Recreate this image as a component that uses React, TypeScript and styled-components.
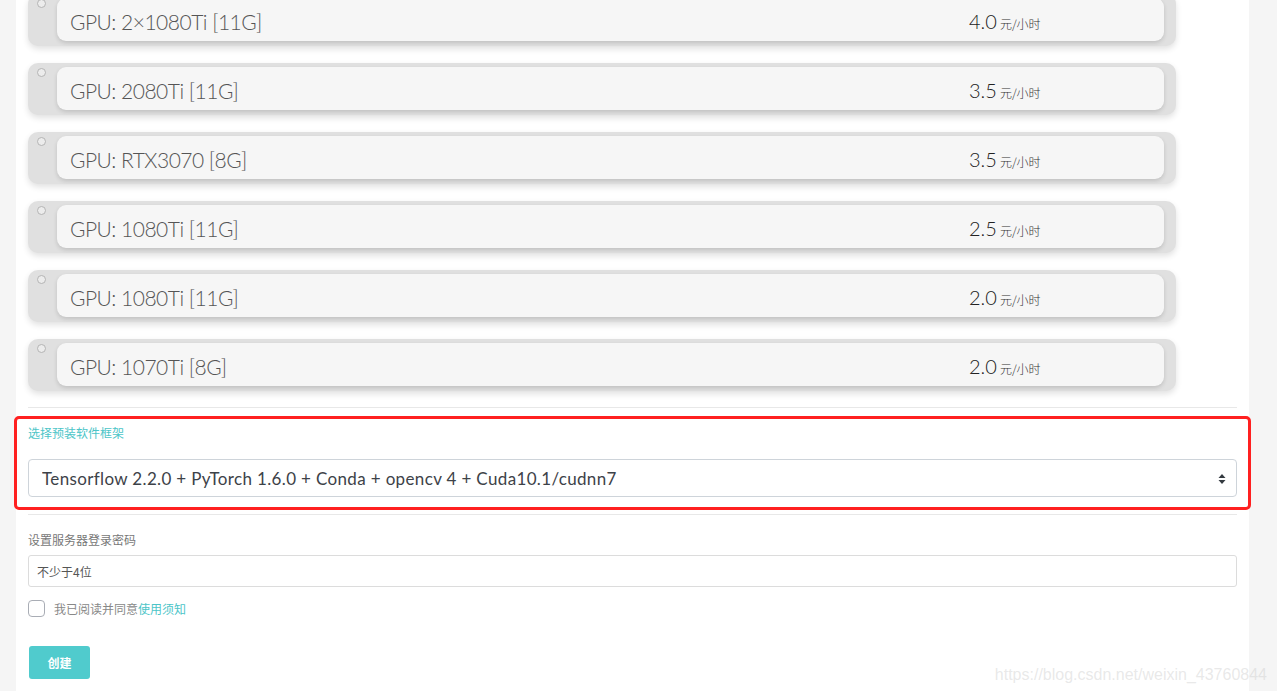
import React from "react";
import styled, { createGlobalStyle } from "styled-components";

const Global = createGlobalStyle`
  html, body { margin: 0; padding: 0; background: #f5f5f5; overflow: hidden; }
  body { font-family: "Lato", "Noto Sans CJK SC", sans-serif; }
  * { box-sizing: border-box; }
`;

const Page = styled.div`
  height: 691px;
  overflow: hidden;
  position: relative;
`;

const Panel = styled.div`
  margin: 0 28px 0 16px;
  background: #fff;
  padding: 0 12px 40px;
  min-height: 691px;
`;

const CardList = styled.div`
  margin-top: -6px;
  display: flex;
  flex-direction: column;
  gap: 17px;
  width: 1148px;
`;

const Card = styled.label`
  display: flex;
  height: 52px;
  background: #e0e0e0;
  border-radius: 10px;
  padding: 4px 12px 5px 9px;
  box-shadow: 0 3px 6px rgba(0, 0, 0, 0.12);
  cursor: pointer;
`;

const Radio = styled.span`
  flex: none;
  width: 9px;
  height: 9px;
  margin-top: 1px;
  margin-right: 11px;
  border-radius: 50%;
  border: 1px solid #b4b4b4;
  background: #ececec;
`;

const CardBody = styled.div`
  flex: 1;
  display: flex;
  align-items: center;
  background: #f6f6f6;
  border-radius: 9px;
  padding: 3px 0 0 13px;
  box-shadow: 0 2px 4px rgba(0, 0, 0, 0.14);
`;

const GpuName = styled.span`
  flex: 1;
  font-family: "Lato", sans-serif;
  font-weight: 300;
  font-size: 21px;
  letter-spacing: -0.5px;
  color: #555;
`;

const Price = styled.span`
  width: 195px;
  font-family: "Lato", sans-serif;
  font-weight: 300;
  font-size: 20px;
  color: #222;
  white-space: nowrap;
`;

const Unit = styled.span`
  margin-left: 3px;
  font-family: "Noto Sans CJK SC", sans-serif;
  font-size: 12px;
  color: #333;
`;

const Divider = styled.hr<{ $top: number; $bottom: number }>`
  border: none;
  border-top: 1px solid #e8e8e8;
  margin: ${(p) => `${p.$top}px 0 ${p.$bottom}px`};
`;

const Highlight = styled.div`
  margin: 0 -14px;
  border: 3px solid #ff2020;
  border-radius: 5px;
  padding: 5px 11px 10px;
`;

const FieldLabel = styled.div<{ $accent?: boolean }>`
  font-family: "Noto Sans CJK SC", sans-serif;
  font-size: 12px;
  line-height: 18px;
  color: ${(p) => (p.$accent ? "#4cc5c8" : "#777")};
`;

const SelectWrap = styled.div`
  position: relative;
  margin-top: 17px;
`;

const Select = styled.select`
  appearance: none;
  width: 100%;
  height: 38px;
  border: 1px solid #ced4da;
  border-radius: 4px;
  background: #fff;
  padding: 0 30px 0 13px;
  font-family: "Lato", sans-serif;
  font-size: 17px;
  letter-spacing: 0.35px;
  color: #3d4248;
`;

const Arrow = styled.svg`
  position: absolute;
  right: 11px;
  top: 15px;
  pointer-events: none;
`;

const Input = styled.input`
  width: 100%;
  height: 32px;
  margin-top: 6px;
  border: 1px solid #dcdcdc;
  border-radius: 3px;
  padding: 0 8px;
  font-family: "Noto Sans CJK SC", sans-serif;
  font-size: 12px;
  color: #555;
  &::placeholder { color: #555; }
`;

const AgreeRow = styled.label`
  display: flex;
  align-items: center;
  gap: 9px;
  margin-top: 13px;
  font-family: "Noto Sans CJK SC", sans-serif;
  font-size: 12px;
  color: #888;
`;

const Box = styled.span`
  width: 17px;
  height: 17px;
  border: 1px solid #a9adb5;
  border-radius: 4px;
  background: #fff;
`;

const Link = styled.a`
  color: #4cc5c8;
  text-decoration: none;
`;

const CreateButton = styled.button`
  display: block;
  margin: 29px 0 0 1px;
  width: 61px;
  height: 33px;
  border: none;
  border-radius: 3px;
  background: #50cbcd;
  color: #fff;
  font-family: "Noto Sans CJK SC", sans-serif;
  font-weight: 700;
  font-size: 12px;
`;

const Watermark = styled.div`
  position: absolute;
  right: 10px;
  bottom: 7px;
  font-family: "Liberation Sans", Arial, sans-serif;
  font-size: 16px;
  color: rgba(205, 205, 205, 0.45);
`;

const gpus = [
  { name: "GPU: 2×1080Ti [11G]", price: "4.0" },
  { name: "GPU: 2080Ti [11G]", price: "3.5" },
  { name: "GPU: RTX3070 [8G]", price: "3.5" },
  { name: "GPU: 1080Ti [11G]", price: "2.5" },
  { name: "GPU: 1080Ti [11G]", price: "2.0" },
  { name: "GPU: 1070Ti [8G]", price: "2.0" },
];

export default function App() {
  return (
    <Page>
      <Global />
      <Panel>
        <CardList>
          {gpus.map((g, i) => (
            <Card key={i}>
              <Radio />
              <CardBody>
                <GpuName>{g.name}</GpuName>
                <Price>
                  {g.price}
                  <Unit>元/小时</Unit>
                </Price>
              </CardBody>
            </Card>
          ))}
        </CardList>
        <Divider $top={16} $bottom={8} />
        <Highlight>
          <FieldLabel $accent>选择预装软件框架</FieldLabel>
          <SelectWrap>
            <Select defaultValue="a">
              <option value="a">
                Tensorflow 2.2.0 + PyTorch 1.6.0 + Conda + opencv 4 + Cuda10.1/cudnn7
              </option>
            </Select>
            <Arrow width="8" height="10" viewBox="0 0 8 10">
              <path d="M4 0 L7.5 4 H0.5 Z" fill="#343a40" />
              <path d="M4 10 L7.5 6 H0.5 Z" fill="#343a40" />
            </Arrow>
          </SelectWrap>
        </Highlight>
        <Divider $top={4} $bottom={16} />
        <FieldLabel>设置服务器登录密码</FieldLabel>
        <Input placeholder="不少于4位" />
        <AgreeRow>
          <Box />
          <span>
            我已阅读并同意<Link>使用须知</Link>
          </span>
        </AgreeRow>
        <CreateButton>创建</CreateButton>
      </Panel>
      <Watermark>https://blog.csdn.net/weixin_43760844</Watermark>
    </Page>
  );
}
